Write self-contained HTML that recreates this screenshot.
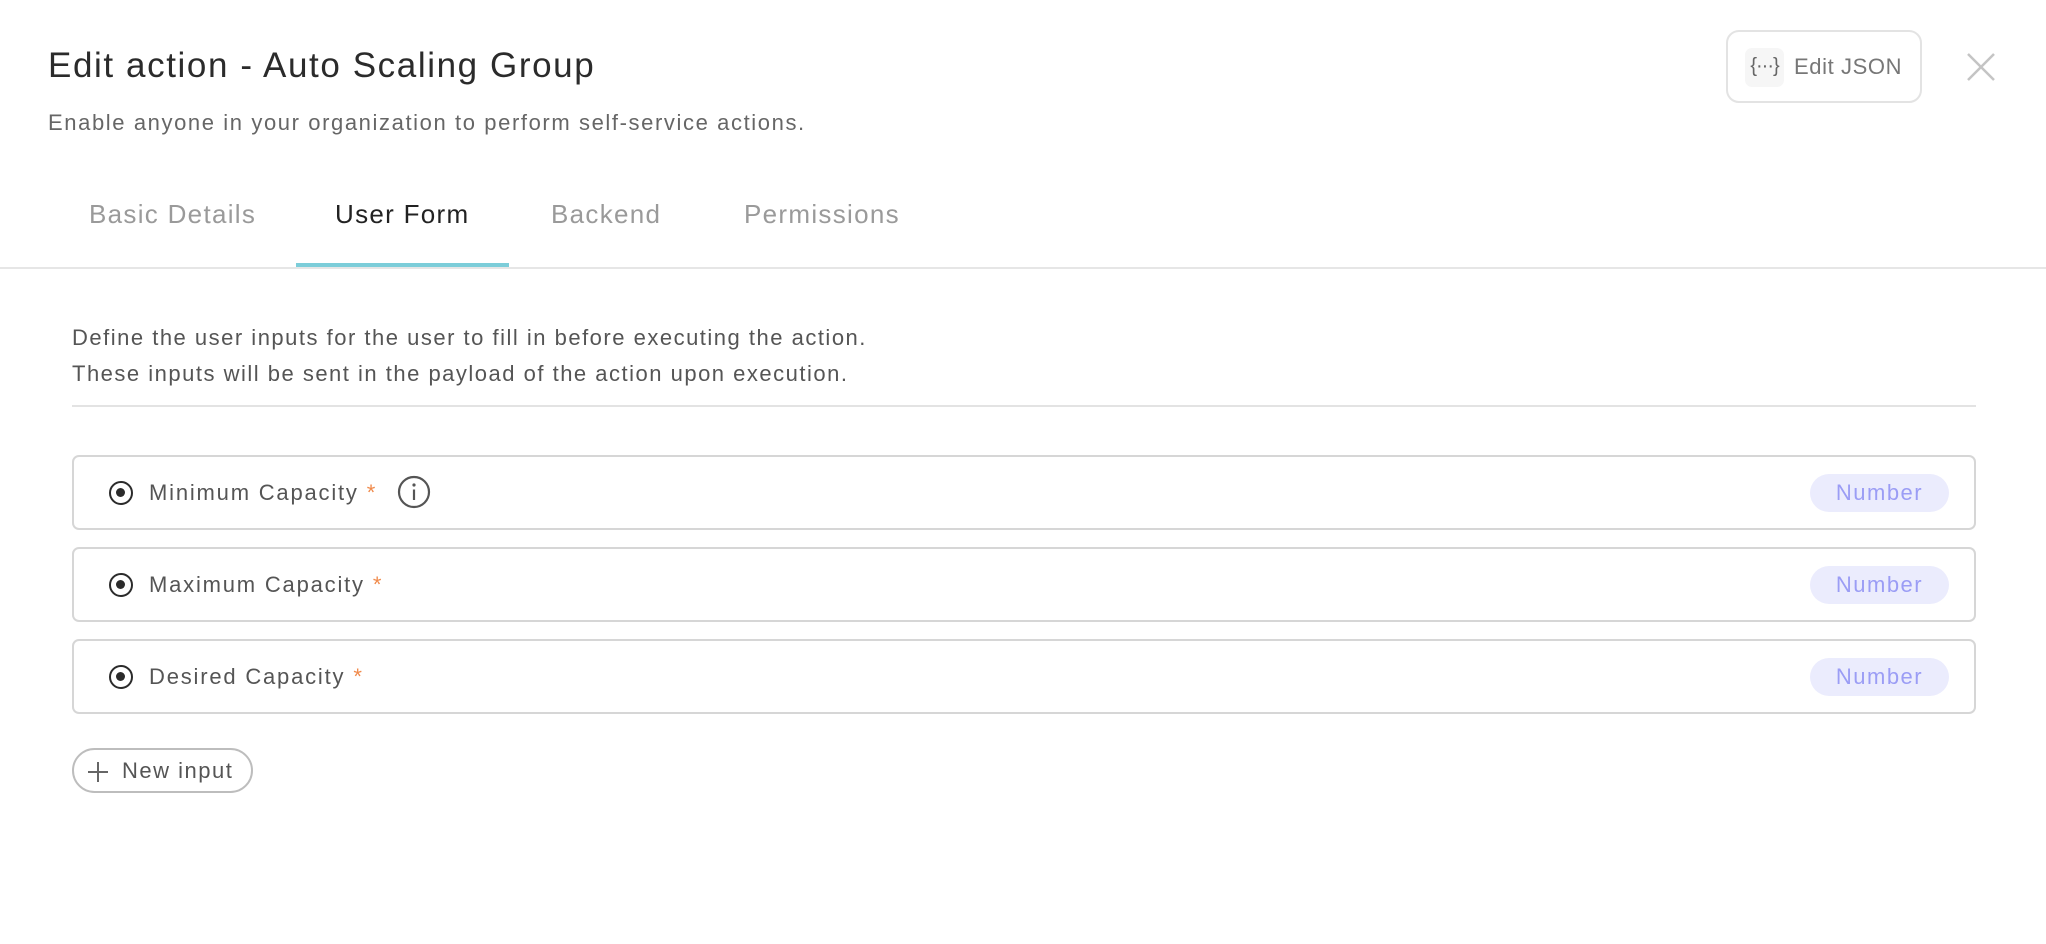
<!DOCTYPE html>
<html><head><meta charset="utf-8"><style>
*{margin:0;padding:0;box-sizing:border-box}
body{width:2046px;height:944px;background:#fff;font-family:"Liberation Sans",sans-serif;position:relative;overflow:hidden;color:#555;letter-spacing:1.5px}
.a{position:absolute;white-space:nowrap}
.title{left:48px;top:45px;font-size:35px;color:#2b2b2b;line-height:42px;letter-spacing:1.6px}
.sub{left:48px;top:109px;font-size:22px;color:#666;line-height:28px;letter-spacing:1.6px}
.tab{top:198px;font-size:26px;color:#9a9a9a;line-height:32px;letter-spacing:1.3px}
.row{left:72px;width:1904px;height:75px;border:2px solid #d6d6d6;border-radius:7px;position:absolute}
.row .lbl{position:absolute;left:75px;top:0;line-height:71px;font-size:22px;color:#555;letter-spacing:1.8px}
.row .lbl b{color:#f08a4b;font-weight:normal;margin-left:8px}
.radio{position:absolute;left:35px;top:24px;width:24px;height:24px;border:2.5px solid #2b2b2b;border-radius:50%}
.radio:after{content:"";position:absolute;left:5px;top:5px;width:9px;height:9px;border-radius:50%;background:#2b2b2b}
.pill{position:absolute;right:25px;top:17px;width:139px;height:38px;border-radius:19px;background:#ebecfd;color:#9b9df5;font-size:22px;line-height:38px;text-align:center}
</style></head><body>
<div class="a title">Edit action - Auto Scaling Group</div>
<div class="a sub">Enable anyone in your organization to perform self-service actions.</div>

<div class="a" style="left:1726px;top:30px;width:196px;height:73px;border:2px solid #e3e3e3;border-radius:13px">
  <div style="position:absolute;left:17px;top:16px;width:39px;height:39px;background:#f6f6f6;border-radius:7px;font-size:20px;color:#666;text-align:center;line-height:37px;letter-spacing:-1px">{···}</div>
  <div style="position:absolute;left:66px;top:0;line-height:69px;font-size:22px;color:#777;letter-spacing:0.6px">Edit JSON</div>
</div>
<svg class="a" style="left:1966px;top:52px" width="30" height="30" viewBox="0 0 30 30"><path d="M2 2L28 28M28 2L2 28" stroke="#c4c4c4" stroke-width="2.5"/></svg>

<div class="a tab" style="left:89px">Basic Details</div>
<div class="a tab" style="left:335px;color:#222">User Form</div>
<div class="a tab" style="left:551px">Backend</div>
<div class="a tab" style="left:744px">Permissions</div>
<div class="a" style="left:0;top:267px;width:2046px;height:2px;background:#e6e6e6"></div>
<div class="a" style="left:296px;top:263px;width:213px;height:4px;background:#7ccdd9"></div>

<div class="a" style="left:72px;top:320px;font-size:22px;line-height:36px;color:#555">Define the user inputs for the user to fill in before executing the action.<br>These inputs will be sent in the payload of the action upon execution.</div>
<div class="a" style="left:72px;top:405px;width:1904px;height:2px;background:#e3e3e3"></div>

<div class="row" style="top:455px"><div class="radio"></div><div class="lbl">Minimum Capacity<b>*</b>
<svg style="vertical-align:middle;margin-left:12px;margin-top:-4px" width="34" height="34" viewBox="0 0 34 34"><circle cx="17" cy="17" r="15" fill="none" stroke="#555" stroke-width="2.2"/><circle cx="17" cy="10" r="1.6" fill="#555"/><path d="M17 14.5V25" stroke="#555" stroke-width="2.2"/></svg></div><div class="pill">Number</div></div>
<div class="row" style="top:547px"><div class="radio"></div><div class="lbl">Maximum Capacity<b>*</b></div><div class="pill">Number</div></div>
<div class="row" style="top:639px"><div class="radio"></div><div class="lbl">Desired Capacity<b>*</b></div><div class="pill">Number</div></div>

<div class="a" style="left:72px;top:748px;width:181px;height:45px;border:2px solid #bdbdbd;border-radius:23px">
  <svg style="position:absolute;left:13px;top:11px" width="22" height="22" viewBox="0 0 22 22"><path d="M11 1V21M1 11H21" stroke="#666" stroke-width="2"/></svg>
  <div style="position:absolute;left:48px;top:0;line-height:41px;font-size:22px;color:#555">New input</div>
</div>
</body></html>
